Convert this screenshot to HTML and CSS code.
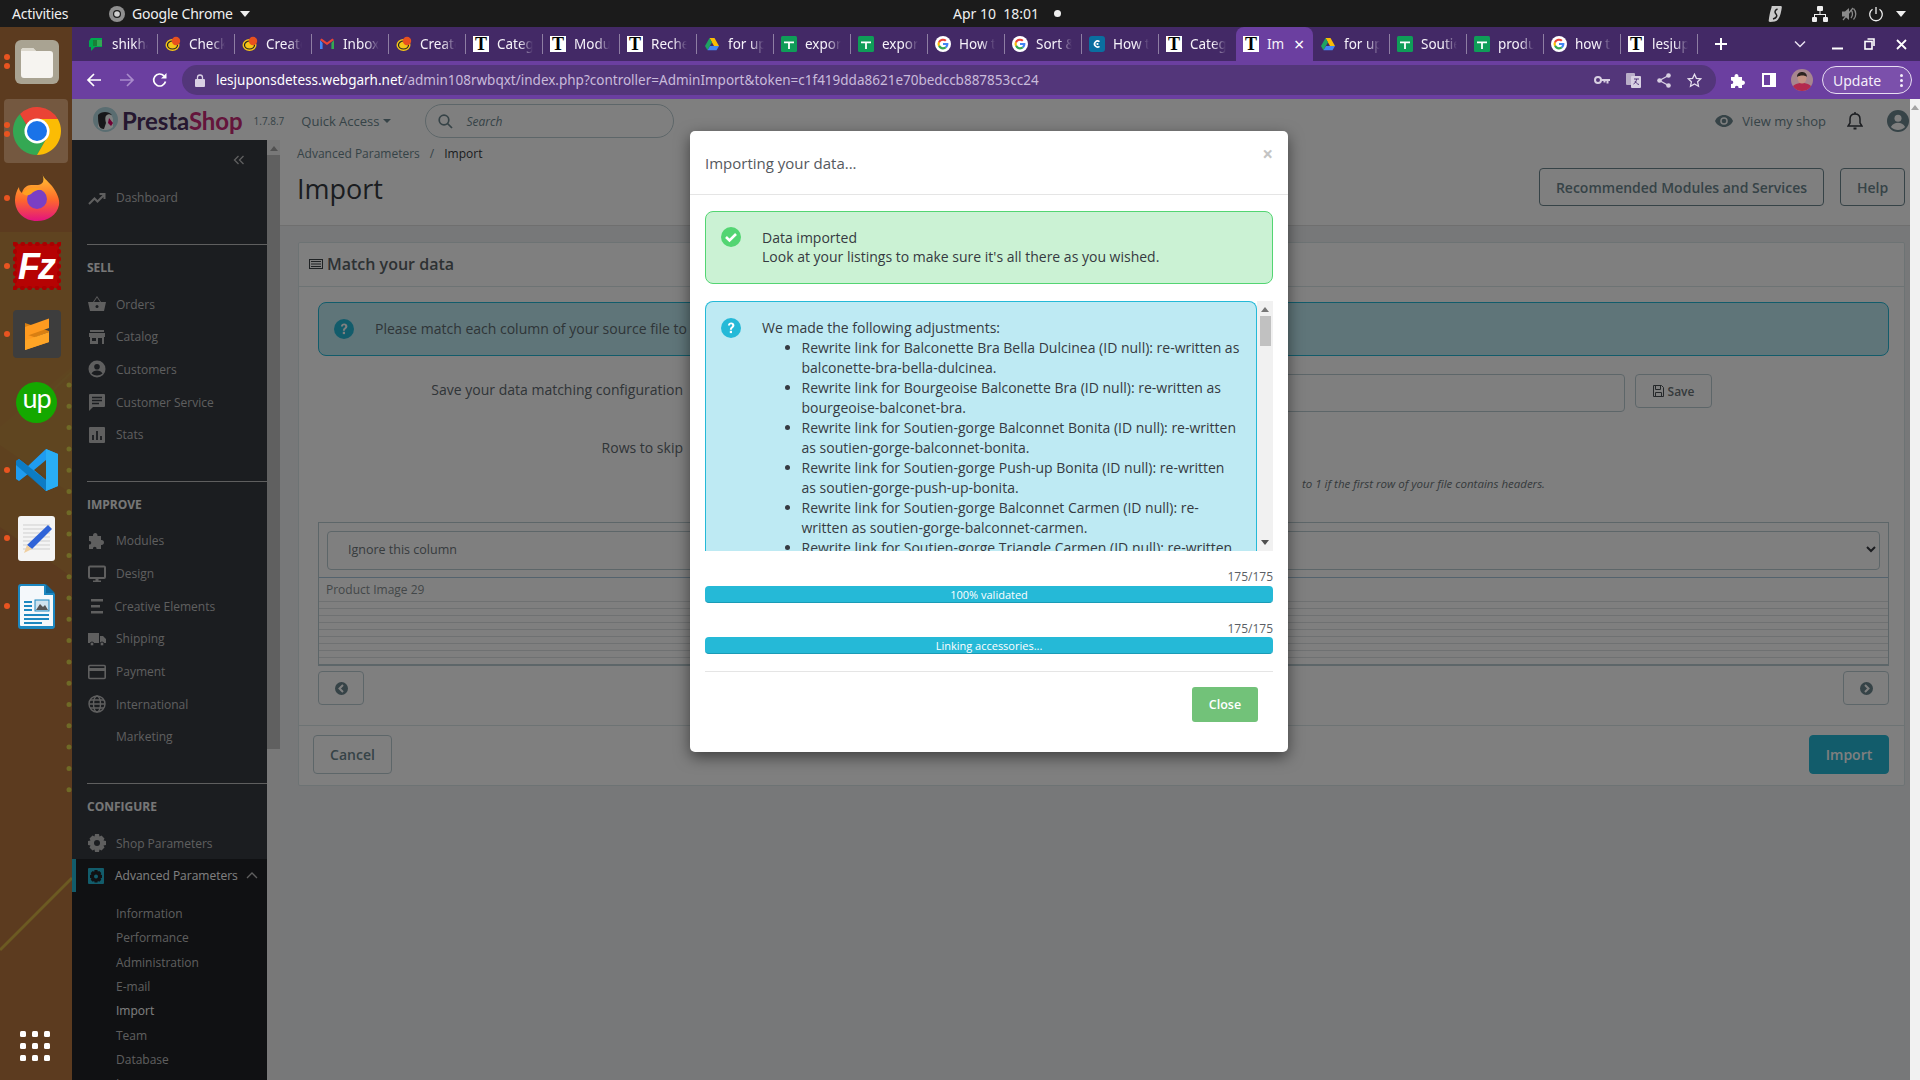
FILE: index.html
```html
<!DOCTYPE html>
<html lang="en">
<head>
<meta charset="utf-8">
<title>Import - PrestaShop</title>
<link rel="stylesheet" href="styles.css">
</head>
<body>
<svg class="defs" width="0" height="0" aria-hidden="true">
  <defs>
    <symbol id="fav-meet" viewBox="0 0 16 16"><path d="M3 2h11v9H7l-4 4v-4H1V5z" fill="#00a94f"/><path d="M5 4h9v6H5z" fill="#34a853"/><path d="M5 4h4v6H5z" fill="#188038"/></symbol>
    <symbol id="fav-chimp" viewBox="0 0 16 16"><ellipse cx="7.5" cy="9" rx="7" ry="6" fill="#f5c518"/><ellipse cx="7.5" cy="9" rx="5" ry="4" fill="none" stroke="#222" stroke-width="1.2"/><circle cx="11" cy="5" r="4.2" fill="#e8501e"/></symbol>
    <symbol id="fav-gmail" viewBox="0 0 16 16"><path d="M1 4v9h2.600V7z" fill="#4285f4"/><path d="M12.400 13H15V4l-2.600 3z" fill="#34a853"/><path d="M1 4l7 5 7-5-1.600-1.400L8 6.400 2.600 2.600z" fill="#ea4335"/></symbol>
    <symbol id="fav-drive" viewBox="0 0 16 16"><path d="M5.500 2h5l4.500 8h-5z" fill="#fbbc04"/><path d="M5.500 2L1 10l2.500 4.200L8 6.300z" fill="#1ea362"/><path d="M3.500 14.200h9L15 10H6z" fill="#4285f4"/></symbol>
    <symbol id="fav-sheet" viewBox="0 0 16 16"><rect width="16" height="16" rx="1.500" fill="#0f9d58"/><path d="M3 5.500h10v1.800H8.900V13H7.100V7.300H3z" fill="#fff"/></symbol>
    <symbol id="fav-g" viewBox="0 0 16 16"><circle cx="8" cy="8" r="8" fill="#fff"/><path d="M13.400 8.100c0-.4 0-.8-.1-1.100H8v2.100h3a2.600 2.600 0 0 1-1.100 1.700l1.700 1.300c1-.9 1.800-2.300 1.800-4z" fill="#4285f4"/><path d="M8 13.500c1.500 0 2.700-.5 3.600-1.400l-1.700-1.300c-.5.300-1.100.5-1.900.5-1.400 0-2.600-1-3.100-2.200L3.100 9.900A5.500 5.500 0 0 0 8 13.500z" fill="#34a853"/><path d="M4.900 9.100a3.300 3.300 0 0 1 0-2.200L3.100 5.600a5.500 5.500 0 0 0 0 4.800z" fill="#fbbc04"/><path d="M8 4.700c.8 0 1.500.3 2.100.8l1.500-1.500A5.500 5.500 0 0 0 3.100 5.600l1.800 1.300C5.400 5.600 6.600 4.700 8 4.700z" fill="#ea4335"/></symbol>
    <symbol id="fav-c" viewBox="0 0 16 16"><rect width="16" height="16" rx="3" fill="#0a6ea0"/><path d="M10.500 5.700a3 3 0 1 0 0 4.600" fill="none" stroke="#fff" stroke-width="1.600"/><circle cx="8.500" cy="8" r="1.100" fill="#fff"/></symbol>
    <symbol id="ic-q" viewBox="0 0 20 20"><circle cx="10" cy="10" r="10" fill="#25b9d7"/><path d="M6.900 7.600C7 5.600 8.400 4.500 10.200 4.500c1.900 0 3.200 1.200 3.200 2.800 0 2.600-2.500 2.500-2.500 4.500H8.900c0-3 2.300-3 2.300-4.400 0-.7-.5-1.200-1.100-1.200-.7 0-1.100.5-1.200 1.400z" fill="#fff"/><rect x="8.800" y="12.800" width="2.200" height="2.300" fill="#fff"/></symbol>
  </defs>
</svg>

<div class="screen">
  <header class="topbar">
    <div class="top-left">
      <span class="activities">Activities</span>
      <svg class="top-chrome" viewBox="0 0 16 16"><circle cx="8" cy="8" r="8" fill="#8f8f8f"/><circle cx="8" cy="8" r="4" fill="#1c1c1c"/><circle cx="8" cy="8" r="2.800" fill="#d0d0d0"/></svg>
      <span class="top-app">Google Chrome</span>
      <span class="caret-w"></span>
    </div>
    <div class="top-clock"><span>Apr 10&nbsp;&nbsp;18:01</span><i class="rec-dot"></i></div>
    <div class="top-right">
      <svg width="14" height="18" viewBox="0 0 14 18"><path d="M4 1h8.500c1 0 1.500.6 1.300 1.500-.6 4-1.500 9-3.800 12-1.400 1.800-4.500 2.500-8 2.500-1 0-1.500-.6-1.300-1.500.6-4 1.300-9 2.800-13C3.700 1.600 3.500 1 4 1z" fill="#c9c9c9"/><path d="M9.500 4C6.500 5 6.500 7.500 8 9s1 4-3 5" fill="none" stroke="#1b1b1b" stroke-width="1.500"/></svg>
      <svg class="net" width="16" height="16" viewBox="0 0 16 16" fill="#eee"><rect x="5" y="0" width="6" height="5" rx="1"/><rect x="0" y="11" width="5" height="5" rx="1"/><rect x="11" y="11" width="5" height="5" rx="1"/><path d="M7.500 5h1v3H14v3h-1V9H3v2H2V8h5.500z"/></svg>
      <svg class="snd" width="16" height="16" viewBox="0 0 16 16"><path d="M1 5.500h3L8 2v12l-4-3.500H1z" fill="#8a8a8a"/><path d="M10 4c2 2 2 6 0 8M12.500 2.500c3 3 3 8 0 11" fill="none" stroke="#8a8a8a" stroke-width="1.300"/><path d="M2 14L12 2" stroke="#8a8a8a" stroke-width="1.200"/></svg>
      <svg class="pwr" width="16" height="16" viewBox="0 0 16 16" fill="none" stroke="#eee" stroke-width="1.300"><path d="M8 1v7"/><path d="M4.500 3.200a6.300 6.300 0 1 0 7 0"/></svg>
      <span class="caret-w caret-right"></span>
    </div>
  </header>

  <div class="main-row">
    <aside class="dock">
      <svg class="wall" width="72" height="1053" viewBox="0 0 72 1053" preserveAspectRatio="none">
        <rect width="72" height="1053" fill="#5c3b1f"/>
        <path d="M0 205h72v262L0 418z" fill="#5f4520" opacity=".9"/>
        <path d="M72 340L0 400v100l72 50z" fill="#5f4720" opacity=".5"/>
        <path d="M0 923L72 851" stroke="#6c5a22" stroke-width="3"/>
        <path d="M72 345L30 385" stroke="#5f4a22" stroke-width="3" opacity=".6"/>
        <path d="M69 358V770" stroke="#6f6a26" stroke-width="5" stroke-dasharray="0 21.300" stroke-linecap="round"/>
      </svg>
      <div class="dock-item"><i class="pip two"></i>
        <svg width="44" height="44" viewBox="0 0 44 44"><rect width="44" height="44" rx="6" fill="#a9a392"/><path d="M6 11c0-1.500 1-3 3-3h9l3 3h14c2 0 3 1 3 3v21c0 2-1 3-3 3H9c-2 0-3-1-3-3z" fill="#f6f4f0"/><path d="M6 11c0-2 1-3 3-3h9l3 3z" fill="#dcd8cd"/></svg>
      </div>
      <div class="dock-item dock-active"><i class="pip two"></i>
        <svg width="48" height="48" viewBox="2 2 44 44"><path d="M24 46A22 22 0 0 1 8.440 8.440L14.470 18.500A11 11 0 0 0 33.500 29.500Z" fill="#34a853"/><path d="M43.050 13A22 22 0 0 1 24 46L33.500 29.500A11 11 0 0 0 24 13Z" fill="#fbbc04"/><path d="M8.440 8.440A22 22 0 0 1 43.050 13H24A11 11 0 0 0 14.470 18.500Z" fill="#ea4335"/><circle cx="24" cy="24" r="11.500" fill="#fff"/><circle cx="24" cy="24" r="9.200" fill="#1a73e8"/></svg>
      </div>
      <div class="dock-item"><i class="pip"></i>
        <svg class="ff" width="46" height="48" viewBox="0 0 46 48"><defs><linearGradient id="ffa" x1="0" y1="0" x2="0" y2="1"><stop offset="0" stop-color="#ffcc33"/><stop offset=".55" stop-color="#ff6a2a"/><stop offset="1" stop-color="#e3127f"/></linearGradient></defs><path d="M28 0c1 5 5 7 10 13 5 7 8 13 7 19-2 10-11 16-22 16C10 48 1 39 1 27c0-5 2-10 4-13 0 3 1 4 3 6 1-5 5-8 9-8 5 0 10 1 12-3 1-3 0-6-1-9z" fill="url(#ffa)"/><circle cx="23" cy="26" r="10" fill="#7a3fc4"/><path d="M8 20c5-5 14-8 21-3-5-1-9 1-12 4-3 2-6 2-9-1z" fill="#ffa020"/></svg>
      </div>
      <div class="dock-item"><i class="pip"></i>
        <svg width="50" height="50" viewBox="0 0 50 50"><rect x="3" y="3" width="44" height="44" fill="#b60303" stroke="#a80000" stroke-width="4" stroke-dasharray="1 6.300" stroke-linecap="round"/><text x="24" y="38" class="fz-text">Fz</text></svg>
      </div>
      <div class="dock-item"><i class="pip"></i>
        <svg width="48" height="48" viewBox="0 0 48 48"><rect width="48" height="48" rx="4" fill="#3d3d3d"/><path d="M12 31l24-9v-1L12 13z" fill="#d97f12"/><path d="M12 17L36 8.500V18L12 26.500z" fill="#ff9a1f"/><path d="M12 24l24 8-24 8z" fill="#ff9a1f"/><path d="M12 30.500L36 22v10L12 40z" fill="#ffa526"/></svg>
      </div>
      <div class="dock-item">
        <svg width="41" height="41" viewBox="0 0 41 41"><circle cx="20.500" cy="20.500" r="20.500" fill="#14a800"/><text x="20.500" y="26" class="up-text">up</text></svg>
      </div>
      <div class="dock-item"><i class="pip"></i>
        <svg width="44" height="42" viewBox="0 0 44 42"><path d="M31 0l12 5v32l-12 5L13 25 4 32 1 30v-18l3-2 9 7zM31 11L19 21l12 10z" fill="#1f9cf0"/><path d="M31 0l12 5v32l-12 5z" fill="#29aef5"/><path d="M1 12l3-2 27 21v11L1 16z" fill="#0a77bd" opacity=".85"/></svg>
      </div>
      <div class="dock-item"><i class="pip"></i>
        <svg width="37" height="45" viewBox="0 0 37 45"><rect width="37" height="45" rx="3" fill="#f4f4f4"/><path d="M5 9h27M5 13h27M5 17h27M5 21h27M5 25h27M5 29h27M5 33h27" stroke="#cfcfcf"/><path d="M30 9l4 4-20 20-5-4z" fill="#2f63d8"/><path d="M9 29l5 4-8 4z" fill="#f0cfa0"/></svg>
      </div>
      <div class="dock-item"><i class="pip"></i>
        <svg width="37" height="45" viewBox="0 0 37 45"><path d="M3 0h24l10 10v32a3 3 0 0 1-3 3H3a3 3 0 0 1-3-3V3a3 3 0 0 1 3-3z" fill="#1c87c0"/><path d="M3 2h23v9h9v31H3a1 1 0 0 1-1-1V3z" fill="#f4f8fb"/><path d="M28 0l9 9h-9z" fill="#0f6a9e"/><path d="M6 17h8v2H6zM6 21h8v2H6zM6 25h8v2H6zM6 30h25v2H6zM6 34h25v2H6zM6 38h18v2H6z" fill="#1c87c0"/><rect x="17" y="16" width="14" height="11" fill="#cfe3ef" stroke="#1c87c0"/><path d="M18 26l4-6 3 3 2-2 3 5z" fill="#555"/></svg>
      </div>
      <div class="app-grid"><i></i><i></i><i></i><i></i><i></i><i></i><i></i><i></i><i></i></div>
    </aside>

    <div class="browser">
      <div class="tabstrip">
        <div class="tab"><svg class="fav"><use href="#fav-meet"/></svg><span class="tab-title">shikha</span></div>
        <div class="tab"><svg class="fav"><use href="#fav-chimp"/></svg><span class="tab-title">Check</span></div>
        <div class="tab"><svg class="fav"><use href="#fav-chimp"/></svg><span class="tab-title">Create</span></div>
        <div class="tab"><svg class="fav"><use href="#fav-gmail"/></svg><span class="tab-title">Inbox</span></div>
        <div class="tab"><svg class="fav"><use href="#fav-chimp"/></svg><span class="tab-title">Create</span></div>
        <div class="tab"><span class="fav-t">T</span><span class="tab-title">Categ</span></div>
        <div class="tab"><span class="fav-t">T</span><span class="tab-title">Modu</span></div>
        <div class="tab"><span class="fav-t">T</span><span class="tab-title">Reche</span></div>
        <div class="tab"><svg class="fav"><use href="#fav-drive"/></svg><span class="tab-title">for up</span></div>
        <div class="tab"><svg class="fav"><use href="#fav-sheet"/></svg><span class="tab-title">expor</span></div>
        <div class="tab"><svg class="fav"><use href="#fav-sheet"/></svg><span class="tab-title">expor</span></div>
        <div class="tab"><svg class="fav"><use href="#fav-g"/></svg><span class="tab-title">How t</span></div>
        <div class="tab"><svg class="fav"><use href="#fav-g"/></svg><span class="tab-title">Sort &amp;</span></div>
        <div class="tab"><svg class="fav"><use href="#fav-c"/></svg><span class="tab-title">How t</span></div>
        <div class="tab tab-prev"><span class="fav-t">T</span><span class="tab-title">Categ</span></div>
        <div class="tab tab-active"><span class="fav-t">T</span><span class="tab-title tab-short">Im</span><span class="tab-x">×</span></div>
        <div class="tab"><svg class="fav"><use href="#fav-drive"/></svg><span class="tab-title">for up</span></div>
        <div class="tab"><svg class="fav"><use href="#fav-sheet"/></svg><span class="tab-title">Soutie</span></div>
        <div class="tab"><svg class="fav"><use href="#fav-sheet"/></svg><span class="tab-title">produ</span></div>
        <div class="tab"><svg class="fav"><use href="#fav-g"/></svg><span class="tab-title">how t</span></div>
        <div class="tab"><span class="fav-t">T</span><span class="tab-title">lesjup</span></div>
        <svg class="new-tab" width="14" height="14" viewBox="0 0 14 14"><path d="M7 1v12M1 7h12" stroke="#fff" stroke-width="2"/></svg>
        <div class="win-controls">
          <svg width="12" height="8" viewBox="0 0 12 8"><path d="M1 1.500l5 5 5-5" fill="none" stroke="#e8e0f0" stroke-width="1.500"/></svg>
          <svg class="wc-min" width="11" height="12" viewBox="0 0 11 12"><path d="M0 10.500h11" stroke="#fff" stroke-width="2"/></svg>
          <svg width="11" height="12" viewBox="0 0 11 12" fill="none" stroke="#fff" stroke-width="1.600"><rect x="1" y="3.500" width="7" height="7.500" fill="#432966"/><path d="M3.500 1h6.500v7"/></svg>
          <svg width="11" height="11" viewBox="0 0 11 11"><path d="M1 1l9 9M10 1l-9 9" stroke="#fff" stroke-width="1.800"/></svg>
        </div>
      </div>

      <div class="toolbar">
        <svg class="nav-ic" width="16" height="16" viewBox="0 0 16 16" fill="none" stroke="#fff" stroke-width="1.700"><path d="M15 8H2M8 2L2 8l6 6"/></svg>
        <svg class="nav-ic" width="16" height="16" viewBox="0 0 16 16" fill="none" stroke="#a98bcb" stroke-width="1.700"><path d="M1 8h13M8 2l6 6-6 6"/></svg>
        <svg class="nav-ic" width="16" height="16" viewBox="0 0 16 16" fill="none" stroke="#fff" stroke-width="1.700"><path d="M13.500 9.500A6 6 0 1 1 12 3.800"/><path d="M14.500 1v5.500H9z" fill="#fff" stroke="none"/></svg>
        <div class="omnibox">
          <svg class="lock" width="10" height="13" viewBox="0 0 10 13"><rect y="5" width="10" height="8" rx="1" fill="#d9d0e4"/><path d="M2.500 5V3.500a2.500 2.500 0 0 1 5 0V5" fill="none" stroke="#d9d0e4" stroke-width="1.300"/></svg>
          <span class="url"><b>lesjuponsdetess.webgarh.net</b>/admin108rwbqxt/index.php?controller=AdminImport&amp;token=c1f419dda8621e70bedccb887853cc24</span>
          <div class="omni-icons">
            <svg width="16" height="10" viewBox="0 0 16 10"><circle cx="4" cy="5" r="3" fill="none" stroke="#d8d0e2" stroke-width="2"/><path d="M7 4h9v2h-1.500v2.500h-2V6h-1v1.500H9.500V6H7z" fill="#d8d0e2"/></svg>
            <svg width="15" height="15" viewBox="0 0 15 15"><rect x="0" y="0" width="9" height="12" rx="1" fill="#b9aec8"/><rect x="5" y="3" width="10" height="12" rx="1" fill="#d8d0e2"/><path d="M8 6h5M10.500 6c0 2-1 4-3 5M9 8c.7 1.500 2 3 4 3.500" stroke="#53367a" fill="none"/></svg>
            <svg width="14" height="15" viewBox="0 0 14 15"><circle cx="11.500" cy="2.500" r="2.300" fill="#d8d0e2"/><circle cx="2.500" cy="7.500" r="2.300" fill="#d8d0e2"/><circle cx="11.500" cy="12.500" r="2.300" fill="#d8d0e2"/><path d="M11.500 2.500l-9 5 9 5" fill="none" stroke="#d8d0e2" stroke-width="1.300"/></svg>
            <svg width="15" height="15" viewBox="0 0 15 15"><path d="M7.500 1.300l1.900 4 4.400.5-3.200 3 .9 4.400-4-2.200-4 2.200.9-4.400-3.200-3 4.400-.5z" fill="none" stroke="#e6dfee" stroke-width="1.300"/></svg>
          </div>
        </div>
        <div class="tool-icons">
          <svg width="16" height="16" viewBox="0 0 16 16"><path d="M1 5h3.500c-.5-4 4.500-4 4 0H12v3.500c4-.5 4 5 0 4.500V16H8.500c.5-3-4-3-3.500 0H1v-4c3 .5 3-4 0-3.500z" fill="#fff"/></svg>
          <svg class="panel-ic" width="14" height="14" viewBox="0 0 14 14"><rect x="1" y="1" width="12" height="12" fill="none" stroke="#fff" stroke-width="2"/><rect x="8" y="1" width="5" height="12" fill="#fff"/></svg>
          <svg class="avatar" width="22" height="22" viewBox="0 0 22 22"><defs><clipPath id="av"><circle cx="11" cy="11" r="11"/></clipPath></defs><g clip-path="url(#av)"><rect width="22" height="22" fill="#a7868f"/><path d="M0 22c1-6 5-8 11-8s10 2 11 8z" fill="#b32a4e"/><ellipse cx="11" cy="9" rx="4.500" ry="5.500" fill="#c49282"/><path d="M6 8c0-4 3-5 5-5s5 1 5 5c-2-2-7-2-10 0z" fill="#2b2320"/></g></svg>
          <div class="update"><span>Update</span><i class="kebab"><b></b><b></b><b></b></i></div>
        </div>
      </div>

      <div class="viewport">
        <div class="app">
          <div class="ps-header">
            <svg class="puffin" width="25" height="25" viewBox="0 0 25 25"><circle cx="12.500" cy="12.500" r="12.500" fill="#b5dbe2"/><path d="M5 20c0-8 2-14 8-14 4 0 7 3 7 7v7c-4 4-11 4-15 0z" fill="#fff"/><path d="M5 8c3-4 11-4 14 0-3-1-4-1-5 0-2 1-2 4-1 8l-2 6c-5 0-6-4-6-14z" fill="#2f2f33"/><path d="M16 11l4 5-2 3-3-3z" fill="#df0067"/></svg>
            <span class="ps-word"><span>Presta</span><em>Shop</em></span>
            <span class="ps-ver">1.7.8.7</span>
            <span class="quick">Quick Access<i class="caret-d"></i></span>
            <div class="search">
              <svg width="15" height="15" viewBox="0 0 15 15" fill="none" stroke="#6c868e" stroke-width="1.700"><circle cx="6" cy="6" r="4.800"/><path d="M9.500 9.500L14 14"/></svg>
              <span>Search</span>
            </div>
            <div class="ps-right">
              <svg width="18" height="12" viewBox="0 0 18 12"><path d="M9 0c4 0 7.500 2.500 9 6-1.500 3.500-5 6-9 6s-7.500-2.500-9-6c1.500-3.500 5-6 9-6z" fill="#6c868e"/><circle cx="9" cy="6" r="3.800" fill="#fff"/><circle cx="9" cy="6" r="2.300" fill="#6c868e"/></svg>
              <span class="shop-link">View my shop</span>
              <svg class="bell" width="16" height="19" viewBox="0 0 16 19" fill="none" stroke="#363a41" stroke-width="1.500"><path d="M1 15h14l-2-3V8c0-3-2-5-5-5S3 5 3 8v4z"/><path d="M6.500 17.500h3" stroke-width="2"/><path d="M8 1v2"/></svg>
              <svg class="prof" width="22" height="22" viewBox="0 0 20 20"><circle cx="10" cy="10" r="10" fill="#6c868e"/><circle cx="10" cy="7.500" r="3.200" fill="#fff"/><path d="M3.500 15.500c1.500-3 4-4 6.500-4s5 1 6.500 4c-3.500 3.500-9.500 3.500-13 0z" fill="#fff"/></svg>
            </div>
          </div>

          <div class="ps-body">
            <nav class="sidebar">
              <div class="collapse"><svg width="12" height="10" viewBox="0 0 12 10" fill="none" stroke="#bebebe" stroke-width="1.300"><path d="M5.500 1l-4 4 4 4M10.500 1l-4 4 4 4"/></svg></div>
              <a class="nav-item"><svg class="nav-icon" viewBox="0 0 18 18"><path d="M1 15l5.500-5.500 3 3L16 6M11.500 5H16.500V10" fill="none" stroke="#bebebe" stroke-width="2"/></svg>Dashboard</a>

              <div class="nav-section">
                <h4>SELL</h4>
                <a class="nav-item"><svg class="nav-icon" viewBox="0 0 18 18"><path d="M0 7h18l-2 9H2zM5 7l4-6 4 6" fill="#bebebe"/><path d="M6 7l3-4.500L12 7z" fill="#363a41"/><circle cx="9" cy="11.500" r="1.500" fill="#363a41"/></svg>Orders</a>
                <a class="nav-item"><svg class="nav-icon" viewBox="0 0 18 18"><path d="M2 2h14v2H2zM1 5h16v4H16v7H2V9H1z" fill="#bebebe"/><path d="M10 10h4v6h-4zM4 10h4v3H4z" fill="#363a41"/></svg>Catalog</a>
                <a class="nav-item"><svg class="nav-icon" viewBox="0 0 18 18"><circle cx="9" cy="9" r="8.500" fill="#bebebe"/><circle cx="9" cy="6.800" r="2.800" fill="#363a41"/><path d="M3.500 13.500c1-2 3-3 5.500-3s4.500 1 5.500 3c-3 2.500-8 2.500-11 0z" fill="#363a41"/></svg>Customers</a>
                <a class="nav-item"><svg class="nav-icon" viewBox="0 0 18 18"><path d="M2 1h14a1 1 0 0 1 1 1v11a1 1 0 0 1-1 1H5l-4 4V2a1 1 0 0 1 1-1z" fill="#bebebe"/><path d="M4 4.500h10M4 7.500h10M4 10.500h7" stroke="#363a41" stroke-width="1.500"/></svg>Customer Service</a>
                <a class="nav-item"><svg class="nav-icon" viewBox="0 0 18 18"><rect x="1" y="1" width="16" height="16" rx="1" fill="#bebebe"/><path d="M5 9v5M9 5v9M13 10v4" stroke="#363a41" stroke-width="1.800"/></svg>Stats</a>
              </div>

              <div class="nav-section">
                <h4>IMPROVE</h4>
                <a class="nav-item"><svg class="nav-icon" viewBox="0 0 18 18"><path d="M1 4h4c-.5-4 5-4 4.500 0H13v4c4-.5 4 5.500 0 5v4H8.500c.5-3-4-3-3.500 0H1v-4.500c3 .5 3-4 0-3.500z" fill="#bebebe"/></svg>Modules</a>
                <a class="nav-item"><svg class="nav-icon" viewBox="0 0 18 18"><rect x="1" y="1.500" width="16" height="11.500" rx="1" fill="none" stroke="#bebebe" stroke-width="2"/><path d="M7.500 13h3v2.500H13V17H5v-1.500h2.500z" fill="#bebebe"/></svg>Design</a>
                <a class="nav-item"><svg class="nav-icon ce" viewBox="0 0 18 18"><path d="M3 2h12v2.500H3zM3 8h9v2.500H3zM3 14h12v2.500H3z" fill="#bebebe"/></svg>Creative Elements</a>
                <a class="nav-item"><svg class="nav-icon" viewBox="0 0 18 18"><path d="M0 3h11v10H0zM12 6h3l3 3v4h-6z" fill="#bebebe"/><circle cx="4" cy="14" r="2" fill="#bebebe" stroke="#363a41"/><circle cx="14" cy="14" r="2" fill="#bebebe" stroke="#363a41"/></svg>Shipping</a>
                <a class="nav-item"><svg class="nav-icon" viewBox="0 0 18 18"><rect x=".8" y="2.500" width="16.400" height="13" rx="1" fill="none" stroke="#bebebe" stroke-width="1.600"/><rect x="1" y="5" width="16" height="3" fill="#bebebe"/></svg>Payment</a>
                <a class="nav-item"><svg class="nav-icon" viewBox="0 0 18 18" fill="none" stroke="#bebebe" stroke-width="1.400"><circle cx="9" cy="9" r="8"/><ellipse cx="9" cy="9" rx="3.500" ry="8"/><path d="M1 9h16M2 5h14M2 13h14"/></svg>International</a>
                <a class="nav-item"><span class="nav-icon"></span>Marketing</a>
              </div>

              <div class="nav-section">
                <h4>CONFIGURE</h4>
                <a class="nav-item"><svg class="nav-icon" viewBox="0 0 18 18"><path d="M7 0h4l.5 2.500 2-1 3 3-1 2L18 7v4l-2.500.5 1 2-3 3-2-1L11 18H7l-.5-2.500-2 1-3-3 1-2L0 11V7l2.500-.5-1-2 3-3 2 1z" fill="#bebebe"/><circle cx="9" cy="9" r="3" fill="#363a41"/></svg>Shop Parameters</a>
                <a class="nav-item nav-active"><svg class="nav-icon ap" viewBox="0 0 18 18"><rect width="16" height="16" x="1" y="1" rx="1" fill="#25b9d7"/><path d="M7.500 3h3l.3 1.600 1.500-.7 2 2-.7 1.500L15 8v3l-1.400.3.700 1.400-2 2-1.500-.7L10.500 15.500h-3L7.200 14l-1.500.7-2-2 .7-1.400L3 11V8l1.400-.4-.7-1.500 2-2 1.500.7z" fill="#202226"/><circle cx="9" cy="9.500" r="2" fill="#25b9d7"/></svg>Advanced Parameters<svg class="chev-up" width="12" height="7" viewBox="0 0 12 7" fill="none" stroke="#bebebe" stroke-width="1.300"><path d="M1 6l5-5 5 5"/></svg></a>
                <ul class="submenu">
                  <li>Information</li>
                  <li>Performance</li>
                  <li>Administration</li>
                  <li>E-mail</li>
                  <li class="cur">Import</li>
                  <li>Team</li>
                  <li>Database</li>
                  <li>Logs</li>
                </ul>
              </div>
            </nav>
            <div class="side-scroll"><i class="sb-up"></i><i class="side-thumb"></i></div>

            <main class="content">
              <div class="page-head">
                <div class="page-head-l">
                  <div class="crumbs">Advanced Parameters<span class="crumb-sep">/</span><b>Import</b></div>
                  <h1>Import</h1>
                </div>
                <div class="page-head-r">
                  <a class="btn-outline btn-lg">Recommended Modules and Services</a>
                  <a class="btn-outline btn-help">Help</a>
                </div>
              </div>

              <section class="panel">
                <div class="panel-head">
                  <svg width="14" height="10" viewBox="0 0 14 10"><rect x=".5" y=".5" width="13" height="9" fill="none" stroke="#3e4448"/><path d="M2 2.500h10M2 5h10M2 7.500h10" stroke="#3e4448"/></svg>
                  <span>Match your data</span>
                </div>
                <div class="panel-body">
                  <div class="info-bar">
                    <svg class="info-q" width="20" height="20"><use href="#ic-q"/></svg>
                    <span>Please match each column of your source file to</span>
                  </div>
                  <div class="form-row">
                    <label>Save your data matching configuration</label>
                    <div class="input"></div>
                    <a class="btn-save"><svg width="11" height="12" viewBox="0 0 11 12" fill="none" stroke="#4a5154"><path d="M.5.500h8l2 2v9H.500z"/><path d="M2.500.500v4h5v-4M2.500 11.500v-4h6v4"/></svg>Save</a>
                  </div>
                  <div class="form-row form-row-skip">
                    <label>Rows to skip</label>
                  </div>
                  <p class="hint"><span>to 1 if the first row of your file contains headers.</span></p>
                  <div class="match-table">
                    <div class="select-cell"><div class="select-box"><span>Ignore this column</span><svg width="10" height="7" viewBox="0 0 10 7" fill="none" stroke="#363a41" stroke-width="2"><path d="M1 1l4 4 4-4"/></svg></div></div>
                    <div class="data-row data-first">Product Image 29</div>
                    <div class="data-row"></div><div class="data-row"></div><div class="data-row"></div><div class="data-row"></div><div class="data-row"></div><div class="data-row"></div><div class="data-row"></div><div class="data-row"></div>
                  </div>
                  <div class="pager">
                    <a class="btn-page"><svg width="13" height="13" viewBox="0 0 13 13"><circle cx="6.500" cy="6.500" r="6.500" fill="#6c868e"/><path d="M8 3L4.500 6.500 8 10" fill="none" stroke="#fff" stroke-width="2"/></svg></a>
                    <a class="btn-page"><svg width="13" height="13" viewBox="0 0 13 13"><circle cx="6.500" cy="6.500" r="6.500" fill="#6c868e"/><path d="M5 3l3.500 3.500L5 10" fill="none" stroke="#fff" stroke-width="2"/></svg></a>
                  </div>
                </div>
                <div class="panel-foot">
                  <a class="btn-cancel">Cancel</a>
                  <a class="btn-import">Import</a>
                </div>
              </section>
            </main>
          </div>

          <div class="backdrop"></div>

          <div class="modal">
            <div class="modal-head"><h3>Importing your data...</h3><span class="modal-x">×</span></div>
            <div class="modal-body">
              <div class="msg msg-ok">
                <svg width="20" height="20" viewBox="0 0 20 20"><circle cx="10" cy="10" r="10" fill="#53d572"/><path d="M5 10l3.500 3.500L15 7" fill="none" stroke="#fff" stroke-width="2.600"/></svg>
                <div>Data imported<br>Look at your listings to make sure it's all there as you wished.</div>
              </div>
              <div class="scroller">
                <div class="msg msg-info">
                  <svg width="20" height="20"><use href="#ic-q"/></svg>
                  <div>
                    We made the following adjustments:
                    <ul>
                      <li>Rewrite link for Balconette Bra Bella Dulcinea (ID null): re-written as<br>balconette-bra-bella-dulcinea.</li>
                      <li>Rewrite link for Bourgeoise Balconette Bra (ID null): re-written as<br>bourgeoise-balconet-bra.</li>
                      <li>Rewrite link for Soutien-gorge Balconnet Bonita (ID null): re-written<br>as soutien-gorge-balconnet-bonita.</li>
                      <li>Rewrite link for Soutien-gorge Push-up Bonita (ID null): re-written<br>as soutien-gorge-push-up-bonita.</li>
                      <li>Rewrite link for Soutien-gorge Balconnet Carmen (ID null): re-<br>written as soutien-gorge-balconnet-carmen.</li>
                      <li>Rewrite link for Soutien-gorge Triangle Carmen (ID null): re-written<br>as soutien-gorge-triangle-carmen.</li>
                    </ul>
                  </div>
                </div>
                <div class="vbar"><i class="arr-up"></i><i class="vthumb"></i><i class="arr-down"></i></div>
              </div>
              <div class="count">175/175</div>
              <div class="pbar">100% validated</div>
              <div class="count count-2">175/175</div>
              <div class="pbar">Linking accessories...</div>
              <div class="modal-foot"><a class="btn-close">Close</a></div>
            </div>
          </div>
        </div>
        <div class="page-scroll"><i class="sb-up"></i></div>
      </div>
    </div>
  </div>
</div>
</body>
</html>
```

FILE: styles.css
```css
* { box-sizing: border-box; }
html, body { margin: 0; padding: 0; height: 100%; overflow: hidden; }
body { font-family: "Open Sans", "Noto Sans", sans-serif; font-size: 13px; color: #363a41; background: #1b1b1b; }
.defs { position: absolute; }
a { display: inline-block; }
.screen { width: 1920px; height: 1080px; display: flex; flex-direction: column; overflow: hidden; }

/* GNOME top bar */
.topbar { height: 27px; flex: none; background: #1b1b1b; display: flex; align-items: center; color: #f0f0f0; font-family: "Noto Sans", sans-serif; font-size: 14px; }
.top-left { display: flex; align-items: center; padding-left: 12px; width: 953px; flex: none; }
.activities { width: 97px; letter-spacing: -.2px; }
.top-chrome { width: 16px; height: 16px; margin-right: 7px; }
.top-app { letter-spacing: -.2px; width: 108px; }
.caret-w { width: 0; height: 0; border-left: 5px solid transparent; border-right: 5px solid transparent; border-top: 6px solid #eee; }
.top-clock { display: flex; align-items: center; width: 815px; flex: none; }
.rec-dot { width: 7px; height: 7px; border-radius: 50%; background: #f0f0f0; margin-left: 15px; }
.top-right { display: flex; align-items: center; }
.top-right svg { flex: none; }
.top-right .net { margin-left: 30px; }
.top-right .snd { margin-left: 13px; }
.top-right .pwr { margin-left: 11px; }
.caret-right { margin-left: 12px; }

.main-row { flex: 1; display: flex; min-height: 0; }

/* dock */
.dock { width: 72px; flex: none; position: relative; display: flex; flex-direction: column; padding-top: 1px; overflow: hidden; }
.wall { position: absolute; left: 0; top: 0; }
.dock-item { position: relative; height: 68px; flex: none; display: flex; align-items: center; justify-content: center; margin-left: 1px; }
.dock-active { padding-top: 1px; }
.dock-active::before { content: ""; position: absolute; left: 3px; top: 3px; width: 64px; height: 64px; border-radius: 4px; background: rgba(255,255,255,.15); }
.dock-item svg { position: relative; }
.dock-item .ff { margin-top: -3px; }
.pip { position: absolute; left: 3px; top: 50%; width: 6px; height: 6px; margin-top: -3px; border-radius: 50%; background: #e95420; }
.pip.two { box-shadow: 0 -9px 0 #e95420; margin-top: 1px; }
.fz-text { font-family: "Liberation Sans", sans-serif; font-weight: 700; font-style: italic; font-size: 36px; fill: #fff; text-anchor: middle; letter-spacing: -2px; }
.up-text { font-family: "Lato", sans-serif; font-weight: 400; font-size: 27px; fill: #fff; text-anchor: middle; letter-spacing: -1px; }
.app-grid { position: absolute; left: 20px; top: 1004px; width: 32px; display: grid; grid-template-columns: repeat(3, 6px); gap: 6px; }
.app-grid i { width: 6px; height: 6px; background: #fff; border-radius: 1.500px; }

.browser { flex: 1; min-width: 0; display: flex; flex-direction: column; }

/* tabs */
.tabstrip { height: 34px; flex: none; background: #432966; display: flex; align-items: center; padding-left: 9px; }
.tab { width: 77px; height: 34px; flex: none; display: flex; align-items: center; padding-left: 7px; position: relative; color: #f6f2fa; font-family: "Noto Sans", sans-serif; font-size: 13.500px; }
.tab::after { content: ""; position: absolute; right: 0; top: 7px; width: 1px; height: 20px; background: rgba(255,255,255,.4); }
.tab-prev::after { display: none; }
.tab-active { background: #6b3fa0; border-radius: 8px 8px 0 0; }
.tab-active::after { display: none; }
.fav { width: 16px; height: 16px; flex: none; }
.fav-t { width: 16px; height: 16px; flex: none; background: #fff; color: #000; font-family: "Liberation Serif", serif; font-weight: 700; font-size: 18px; line-height: 16px; text-align: center; overflow: hidden; }
.tab-title { margin-left: 8px; width: 36px; overflow: hidden; white-space: nowrap; -webkit-mask-image: linear-gradient(90deg, #000 62%, transparent 100%); mask-image: linear-gradient(90deg, #000 62%, transparent 100%); }
.tab-short { width: 18px; -webkit-mask-image: none; mask-image: none; }
.tab-x { font-size: 18px; margin-left: 9px; line-height: 1; color: #fff; }
.new-tab { margin-left: 16px; flex: none; }
.win-controls { display: flex; align-items: center; margin-left: 66px; }
.win-controls svg { flex: none; margin-right: 21px; }
.win-controls .wc-min { margin-left: 5px; }

/* toolbar */
.toolbar { height: 38px; flex: none; background: #6b3fa0; display: flex; align-items: center; padding-left: 14px; }
.nav-ic { flex: none; margin-right: 17px; }
.omnibox { margin-left: -3px; width: 1534px; height: 30px; border-radius: 15px; background: #53367a; display: flex; align-items: center; padding-left: 13px; flex: none; }
.lock { flex: none; }
.url { margin-left: 11px; color: #c9bbdb; font-family: "Noto Sans", sans-serif; font-size: 13.500px; white-space: nowrap; flex: none; width: 1290px; }
.url b { color: #fff; font-weight: 400; }
.omni-icons { display: flex; align-items: center; gap: 16px; margin-left: 88px; flex: none; }
.tool-icons { display: flex; align-items: center; margin-left: 14px; flex: none; }
.panel-ic { margin-left: 16px; }
.avatar { margin-left: 15px; }
.update { margin-left: 9px; width: 90px; height: 28px; border: 1px solid #e8def2; border-radius: 14px; background: #7b50ab; color: #f4eefa; display: flex; align-items: center; justify-content: space-between; padding: 0 8px 0 10px; font-family: "Noto Sans", sans-serif; font-size: 14px; }
.kebab { display: flex; flex-direction: column; gap: 2px; }
.kebab b { width: 3px; height: 3px; border-radius: 50%; background: #f4eefa; display: block; }

/* viewport and PrestaShop admin */
.viewport { flex: 1; display: flex; min-height: 0; }
.page-scroll { width: 10px; flex: none; background: #f1f1f1; }
.sb-up { display: block; width: 0; height: 0; border-left: 4px solid transparent; border-right: 4px solid transparent; border-bottom: 5px solid #a3a3a3; margin: 6px auto 0; }
.app { flex: 1; min-width: 0; position: relative; background: #eff1f2; display: flex; flex-direction: column; overflow: hidden; }
.ps-header { height: 41px; flex: none; background: #fff; display: flex; align-items: center; padding: 2px 0 0 21px; }
.puffin { flex: none; margin-top: -2px; }
.ps-word { margin-left: 4px; font-family: "Lato", sans-serif; font-weight: 700; font-size: 24px; letter-spacing: -.1px; }
.ps-word span { color: #4a2f60; }
.ps-word em { font-style: normal; color: #c92a77; }
.ps-ver { margin-left: 11px; font-size: 10px; color: #6c868e; }
.quick { margin-left: 17px; font-size: 13px; color: #6c868e; display: flex; align-items: center; }
.caret-d { width: 0; height: 0; border-left: 4px solid transparent; border-right: 4px solid transparent; border-top: 4px solid #6c868e; margin-left: 4px; }
.search { margin-left: 34px; width: 249px; height: 34px; border: 1px solid #bbcdd2; border-radius: 17px; display: flex; align-items: center; padding: 1px 0 0 12px; color: #6c868e; font-style: italic; font-size: 12px; }
.search span { margin-left: 13px; }
.ps-right { margin-left: auto; display: flex; align-items: center; color: #6c868e; font-size: 13px; }
.shop-link { margin-left: 9px; }
.bell { margin-left: 21px; }
.prof { margin-left: 24px; flex: none; margin-right: 1px; }

.ps-body { flex: 1; display: flex; min-height: 0; }
.sidebar { width: 195px; flex: none; background: #363a41; overflow: hidden; color: #bebebe; font-size: 12px; }
.collapse { height: 41.600px; display: flex; justify-content: flex-end; align-items: center; padding: 0 22px 2px 0; }
.nav-item { display: flex; align-items: center; height: 32.700px; padding-left: 16px; white-space: nowrap; }
.nav-icon { width: 18px; height: 18px; flex: none; margin-right: 10px; display: block; }
.nav-icon.ce { margin-right: 8.500px; }
.nav-section { margin-top: 29.400px; margin-left: 15px; border-top: 1px solid #bebebe; }
.nav-section h4 { margin: 0; height: 43px; padding-top: 3px; display: flex; align-items: center; font-size: 12px; font-weight: 700; color: #efefef; }
.nav-section .nav-item { margin-left: -15px; }
.nav-active { position: relative; color: #fff; background: #202226; border-left: 4px solid #25b9d7; padding-left: 11px; }
.nav-icon.ap { margin-right: 10px; }
.chev-up { position: absolute; right: 9px; top: 13px; }
.submenu { list-style: none; margin: 0 0 0 -15px; padding: 10px 0 0 44px; background: #202226; }
.submenu li { height: 24.300px; line-height: 24.300px; }
.submenu .cur { color: #fff; }
.side-scroll { width: 13px; flex: none; background: #f1f1f1; position: relative; }
.side-thumb { position: absolute; left: 0; top: 15px; width: 13px; height: 594px; background: #c1c1c1; }

.content { flex: 1; min-width: 0; }
.page-head { height: 86px; background: #fff; border-bottom: 1px solid #dfdfdf; display: flex; justify-content: space-between; padding: 4px 5px 0 17px; }
.crumbs { line-height: 20px; font-size: 12px; color: #6c868e; }
.crumb-sep { margin: 0 10px; }
.crumbs b { font-weight: 400; color: #363a41; }
h1 { margin: 5px 0 0; font-size: 27px; font-weight: 400; line-height: 40px; color: #363a41; }
.page-head-r { display: flex; gap: 16px; padding-top: 24px; height: 62px; }
.btn-outline { height: 38px; line-height: 37px; border: 1px solid #6c868e; border-radius: 4px; color: #6c868e; font-size: 14px; font-weight: 600; text-align: center; }
.btn-lg { width: 285px; }
.btn-help { width: 65px; }

.panel { margin: 16px 5px 0 18px; height: 544px; background: #fff; border: 1px solid #dbe6e9; display: flex; flex-direction: column; border-radius: 2px; }
.panel-head { height: 44px; flex: none; border-bottom: 1px solid #dbe6e9; display: flex; align-items: center; padding: 0 0 2px 10px; gap: 4px; font-size: 16px; font-weight: 600; color: #5a6367; }
.panel-body { flex: 1; padding: 15px 15px 0 19px; }
.info-bar { height: 54px; border: 1px solid #25b9d7; border-radius: 8px; background: #beeaf3; display: flex; align-items: center; padding: 0 0 1px 15px; white-space: nowrap; overflow: hidden; color: #5f6a70; font-size: 14px; }
.info-q { margin-right: 21px; flex: none; }
.form-row { margin-top: 18px; height: 38px; display: flex; align-items: flex-start; }
.form-row label { width: 365px; flex: none; text-align: right; line-height: 32px; font-size: 14px; color: #5f6a70; }
.input { margin-left: 7px; width: 935px; height: 38px; flex: none; border: 1px solid #bbcdd2; border-radius: 4px; }
.btn-save { margin-left: 10px; width: 77px; height: 34px; border: 1px solid #bbcdd2; border-radius: 4px; display: flex; align-items: center; justify-content: center; gap: 4px; color: #6c7579; font-size: 12px; font-weight: 600; }
.form-row-skip label { line-height: 36px; }
.hint { margin: 7px 0 0 372px; width: 855px; height: 18px; line-height: 18px; display: flex; justify-content: flex-end; white-space: nowrap; font-style: italic; font-size: 11.500px; color: #6c7579; }
.match-table { margin-top: 29px; height: 144px; border: 1px solid #bbcdd2; border-bottom-width: 2px; }
.select-cell { height: 55px; padding: 8px; border-bottom: 1px solid #a9c6dc; }
.select-box { height: 39px; border: 1px solid #bbcdd2; border-radius: 4px; display: flex; align-items: center; justify-content: space-between; padding: 0 3px 3px 20px; font-size: 12.500px; color: #6f787c; }
.data-row { height: 7px; border-bottom: 1px solid #dfe3e5; }
.data-first { height: 24px; padding-left: 7px; font-size: 12px; line-height: 23px; color: #878f92; }
.pager { margin-top: 5px; display: flex; justify-content: space-between; }
.btn-page { width: 46px; height: 34px; border: 1px solid #bbcdd2; border-radius: 4px; display: flex; align-items: center; justify-content: center; }
.panel-foot { height: 60px; flex: none; border-top: 1px solid #dbe6e9; display: flex; justify-content: space-between; align-items: flex-start; padding: 9px 15px 0 14px; }
.btn-cancel, .btn-import { height: 39px; line-height: 38px; border-radius: 4px; text-align: center; font-size: 14px; font-weight: 600; }
.btn-cancel { width: 79px; border: 1px solid #bbcdd2; color: #6c868e; }
.btn-import { width: 80px; border: 1px solid #25b9d7; background: #25b9d7; color: #fff; }

.backdrop { position: absolute; inset: 0; background: rgba(0,0,0,.5); }

/* modal */
.modal { position: absolute; left: 618px; top: 32px; width: 598px; height: 621px; background: #fff; border-radius: 5px; box-shadow: 0 5px 15px rgba(0,0,0,.5); color: #363a41; font-size: 14px; }
.modal-head { height: 64px; border-bottom: 1px solid #e5e5e5; padding: 0 15px; position: relative; }
.modal-head h3 { margin: 0; font-size: 15px; font-weight: 400; line-height: 64px; color: #55595e; }
.modal-x { position: absolute; right: 15px; top: 9px; font-size: 19px; font-weight: 700; line-height: 28px; color: #c4c4c4; }
.modal-body { padding: 16px 15px 0; }
.msg { display: flex; line-height: 20px; }
.msg-ok { height: 73px; background: #cbf2d4; border: 1px solid #53d572; border-radius: 8px; padding: 16px 0 0 15px; line-height: 19px; }
.msg-ok svg { margin-top: -1px; }
.msg-ok svg, .msg-info svg { flex: none; margin-right: 21px; }
.scroller { margin-top: 17px; height: 250px; display: flex; overflow: hidden; }
.msg-info { width: 552px; flex: none; background: #beeaf3; border: 1px solid #25b9d7; border-bottom: none; border-radius: 8px 8px 0 0; padding: 16px 0 0 15px; height: 300px; }
.msg-info ul { margin: 0; padding-left: 39.500px; white-space: nowrap; }
.vbar { flex: 1; background: #f1f1f1; position: relative; }
.arr-up { position: absolute; left: 4px; top: 6px; border-left: 4px solid transparent; border-right: 4px solid transparent; border-bottom: 5px solid #777; }
.arr-down { position: absolute; left: 4px; bottom: 6px; border-left: 4px solid transparent; border-right: 4px solid transparent; border-top: 5px solid #505050; }
.vthumb { position: absolute; left: 2.500px; top: 15px; width: 11px; height: 30px; background: #c1c1c1; }
.count { margin-top: 17px; height: 18px; line-height: 18px; text-align: right; font-size: 12px; color: #5b5f65; }
.count-2 { margin-top: 16px; line-height: 20px; }
.pbar { height: 17px; border-radius: 4px; background: #25b9d7; border-bottom: 1px solid #1a9bb6; color: #fff; font-size: 11px; line-height: 18px; text-align: center; }
.modal-foot { margin-top: 17px; border-top: 1px solid #e5e5e5; padding: 15px 15px 0 0; display: flex; justify-content: flex-end; }
.btn-close { width: 66px; height: 35px; line-height: 35px; border-radius: 3px; background: #72c279; color: #fff; text-align: center; font-size: 12.500px; font-weight: 600; }
```
